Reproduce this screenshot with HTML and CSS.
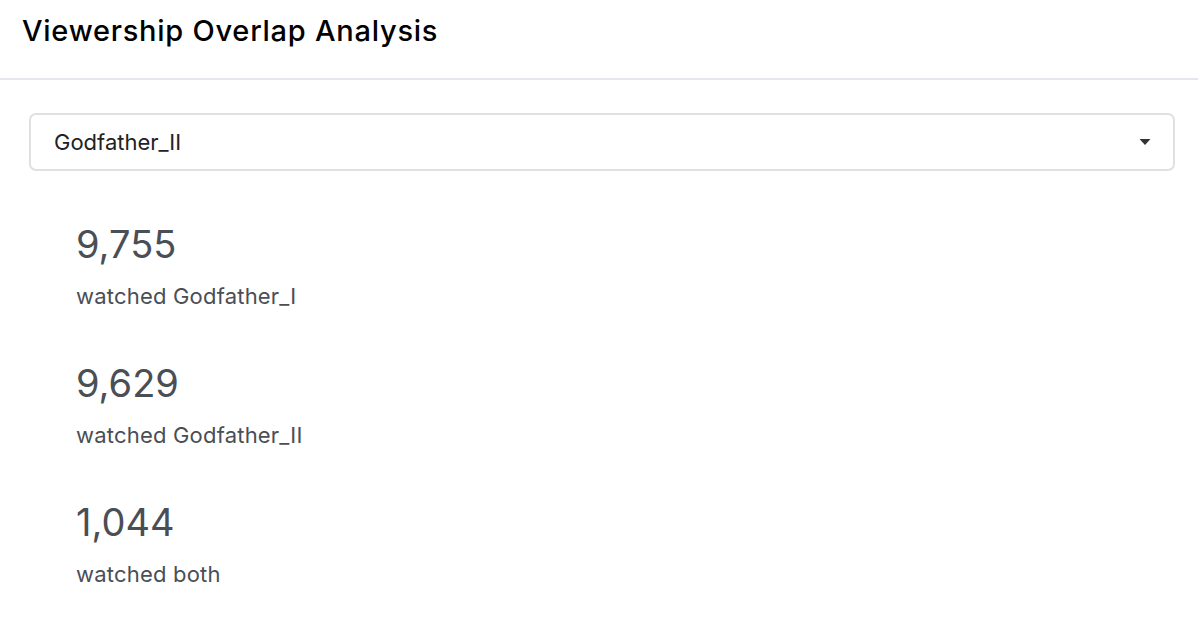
FILE: index.html
```html
<!DOCTYPE html>
<html>
<head>
<meta charset="utf-8">
<link rel="stylesheet" href="styles.css">
</head>
<body>
<header class="header">
  <h1 class="title">Viewership Overlap Analysis</h1>
</header>
<main class="content">
  <div class="select">
    <span class="select-value">Godfather_II</span>
    <svg class="caret" width="12" height="8" viewBox="0 0 12 8"><path d="M0.5 1 L11.5 1 L6 7 Z" fill="#333"/></svg>
  </div>
  <div class="stats">
    <div class="stat">
      <div class="stat-num">9,755</div>
      <div class="stat-label">watched Godfather_I</div>
    </div>
    <div class="stat">
      <div class="stat-num">9,629</div>
      <div class="stat-label">watched Godfather_II</div>
    </div>
    <div class="stat">
      <div class="stat-num">1,044</div>
      <div class="stat-label">watched both</div>
    </div>
  </div>
</main>
</body>
</html>
```
FILE: styles.css
```css
* { box-sizing: border-box; }
body {
  margin: 0;
  background: #fff;
  font-family: Inter, "Liberation Sans", sans-serif;
}
.header {
  height: 80px;
  border-bottom: 2px solid #e6e6ef;
  padding: 13px 22px 0;
}
.title {
  margin: 0;
  font-size: 29px;
  font-weight: 500;
  letter-spacing: 0.75px;
  color: #000;
  line-height: 36px;
}
.content {
  padding: 33px 23px 0 29px;
}
.select {
  height: 58px;
  border: 2px solid #e0e0e0;
  border-radius: 7px;
  display: flex;
  align-items: center;
  justify-content: space-between;
  padding: 0 22px 0 23px;
}
.select-value {
  font-size: 22px;
  color: #222;
}
.stats {
  display: flex;
  flex-direction: column;
  gap: 51px;
  padding: 50px 0 0 47px;
}
.stat-num {
  font-size: 38px;
  color: #4a4e55;
  line-height: 46px;
}
.stat-label {
  margin-top: 16px;
  font-size: 22px;
  letter-spacing: 0.2px;
  color: #4a4e55;
  line-height: 26px;
}
```
